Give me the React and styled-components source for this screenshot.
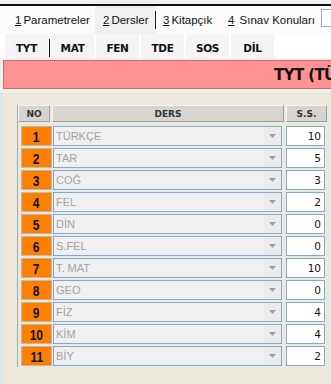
import React from "react";
import styled, { createGlobalStyle } from "styled-components";

const Global = createGlobalStyle`
  html, body { margin: 0; padding: 0; background: #f0f0f0; }
  body { font-family: "Liberation Sans", Arial, sans-serif; }
`;

const Page = styled.div`
  width: 331px;
  height: 384px;
  overflow: hidden;
  display: flex;
  flex-direction: column;
  background: #f0f0f0;
`;

const TopStrip = styled.div`
  height: 4px;
  background: #f0f0f0;
  border-bottom: 2px solid #111;
  flex: none;
`;

const MainTabs = styled.div`
  height: 28px;
  display: flex;
  align-items: stretch;
  background: #fbfbfb;
  padding-left: 5px;
  flex: none;
  position: relative;
  white-space: nowrap;
`;

const MainTab = styled.div`
  width: ${(p) => p.$w}px;
  flex: none;
  box-sizing: border-box;
  display: flex;
  align-items: center;
  padding-left: ${(p) => p.$pad}px;
  font-family: "Liberation Sans", Arial, sans-serif;
  font-size: 11.5px;
  color: #111;
  background: ${(p) => (p.$active ? "#f0f0f0" : "transparent")};
  u { text-decoration: underline; margin-right: 2px; }
`;

const Sep = styled.div`
  width: 1px;
  flex: none;
  background: #222;
  margin: 5px 0 5px;
`;

const EdgeBox = styled.div`
  position: absolute;
  right: -2px;
  top: 3px;
  width: 10px;
  height: 16px;
  border: 1px solid #a8a8a8;
  background: #fff;
`;

const SubTabs = styled.div`
  height: 24px;
  display: flex;
  align-items: stretch;
  padding: 0 0 0 5px;
  gap: 2px;
  background: #fff;
  flex: none;
`;

const SubTab = styled.div`
  width: ${(p) => p.$w}px;
  display: flex;
  align-items: center;
  justify-content: center;
  padding-top: 3px;
  background: #f5f5f5;
  font-family: "DejaVu Sans", sans-serif;
  font-weight: bold;
  font-size: 10.5px;
  color: #111;
  letter-spacing: -0.3px;
`;

const SubSep = styled.div`
  width: 1px;
  background: #111;
  margin: 5px -1px 1px;
`;

const PinkBar = styled.div`
  margin: 2px 0 0 3px;
  height: 27px;
  background: #ff9292;
  border: 1px solid #c57070;
  border-right: none;
  display: flex;
  align-items: center;
  padding-left: 270px;
  overflow: hidden;
  white-space: nowrap;
  flex: none;
`;

const PinkTitle = styled.div`
  font-family: "DejaVu Sans", sans-serif;
  font-weight: bold;
  font-size: 15px;
  color: #111;
  letter-spacing: -0.6px;
`;

const Body = styled.div`
  flex: 1;
  display: flex;
  margin-top: 3px;
`;

const LeftStrip = styled.div`
  width: 4px;
  background: #dfe7ee;
`;

const Panel = styled.div`
  flex: 1;
  background: #ece9dc;
  padding: 13px 0 0 13px;
`;

const Grid = styled.div`
  display: grid;
  grid-template-columns: 32px 232px 41px;
  column-gap: 2px;
  row-gap: 2px;
  border-left: 1px solid #a9a9a9;
  width: max-content;
  padding-bottom: 1px;
`;

const HeadCell = styled.div`
  height: 15px;
  margin-bottom: 2px;
  background: #d6d4d0;
  border-top: 1px solid #f4f4f4;
  border-left: 1px solid #f4f4f4;
  border-bottom: 1px solid #9c9c9c;
  border-right: 1px solid #9c9c9c;
  display: flex;
  align-items: center;
  justify-content: center;
  font-family: "DejaVu Sans", sans-serif;
  font-weight: bold;
  font-size: 9px;
  color: #333;
`;

const NoCell = styled.div`
  margin-left: 3px;
  margin-right: -2px;
  height: 18px;
  border: 1px solid #bdb9b0;
  background: #ff8000;
  display: flex;
  align-items: center;
  justify-content: center;
  font-family: "Liberation Sans", Arial, sans-serif;
  font-weight: bold;
  font-size: 15px;
  color: #111;
  span { display: inline-block; transform: scaleX(0.8); }
`;

const Combo = styled.div`
  height: 18px;
  margin-left: 1px;
  margin-right: 2px;
  border: 1px solid #7fa9d6;
  background: #f0f0f0;
  display: flex;
  align-items: center;
`;

const ComboText = styled.div`
  flex: 1;
  padding-left: 2px;
  font-family: "Liberation Sans", Arial, sans-serif;
  font-size: 11px;
  color: #a3a3a3;
`;

const ComboBtn = styled.div`
  width: 17px;
  height: 18px;
  display: flex;
  align-items: center;
  justify-content: center;
  background: #ececec;
`;

const NumBox = styled.div`
  height: 18px;
  border: 1px solid #7fa9d6;
  background: #fff;
  display: flex;
  align-items: center;
  justify-content: flex-end;
  padding-right: 3px;
  margin-right: 2px;
  font-family: "DejaVu Sans", sans-serif;
  font-size: 10.5px;
  color: #111;
`;

const Arrow = () => (
  <svg width="7" height="4" viewBox="0 0 7 4">
    <path d="M0 0 H7 L3.5 4 Z" fill="#a0a0a0" />
  </svg>
);

const rows = [
  ["1", "TÜRKÇE", 10],
  ["2", "TAR", 5],
  ["3", "COĞ", 3],
  ["4", "FEL", 2],
  ["5", "DİN", 0],
  ["6", "S.FEL", 0],
  ["7", "T. MAT", 10],
  ["8", "GEO", 0],
  ["9", "FİZ", 4],
  ["10", "KİM", 4],
  ["11", "BİY", 2],
];

export default function App() {
  return (
    <Page>
      <Global />
      <TopStrip />
      <MainTabs>
        <MainTab $w={90} $pad={10}><span><u>1</u>Parametreler</span></MainTab>
        <MainTab $w={60} $pad={8} $active><span><u>2</u>Dersler</span></MainTab>
        <Sep />
        <MainTab $w={63} $pad={7}><span><u>3</u>Kitapçık</span></MainTab>
        <MainTab $w={100} $pad={9}><span><u>4</u>&nbsp;Sınav Konuları</span></MainTab>
        <EdgeBox />
      </MainTabs>
      <SubTabs>
        <SubTab $w={43}>TYT</SubTab>
        <SubSep />
        <SubTab $w={43}>MAT</SubTab>
        <SubTab $w={43}>FEN</SubTab>
        <SubTab $w={43}>TDE</SubTab>
        <SubTab $w={43}>SOS</SubTab>
        <SubTab $w={43}>DİL</SubTab>
      </SubTabs>
      <PinkBar>
        <PinkTitle>TYT (TÜRKÇE)</PinkTitle>
      </PinkBar>
      <Body>
        <LeftStrip />
        <Panel>
          <Grid>
            <HeadCell>NO</HeadCell>
            <HeadCell>DERS</HeadCell>
            <HeadCell>S.S.</HeadCell>
            {rows.map(([n, d, s]) => (
              <React.Fragment key={n}>
                <NoCell><span>{n}</span></NoCell>
                <Combo>
                  <ComboText>{d}</ComboText>
                  <ComboBtn><Arrow /></ComboBtn>
                </Combo>
                <NumBox>{s}</NumBox>
              </React.Fragment>
            ))}
          </Grid>
        </Panel>
      </Body>
    </Page>
  );
}
